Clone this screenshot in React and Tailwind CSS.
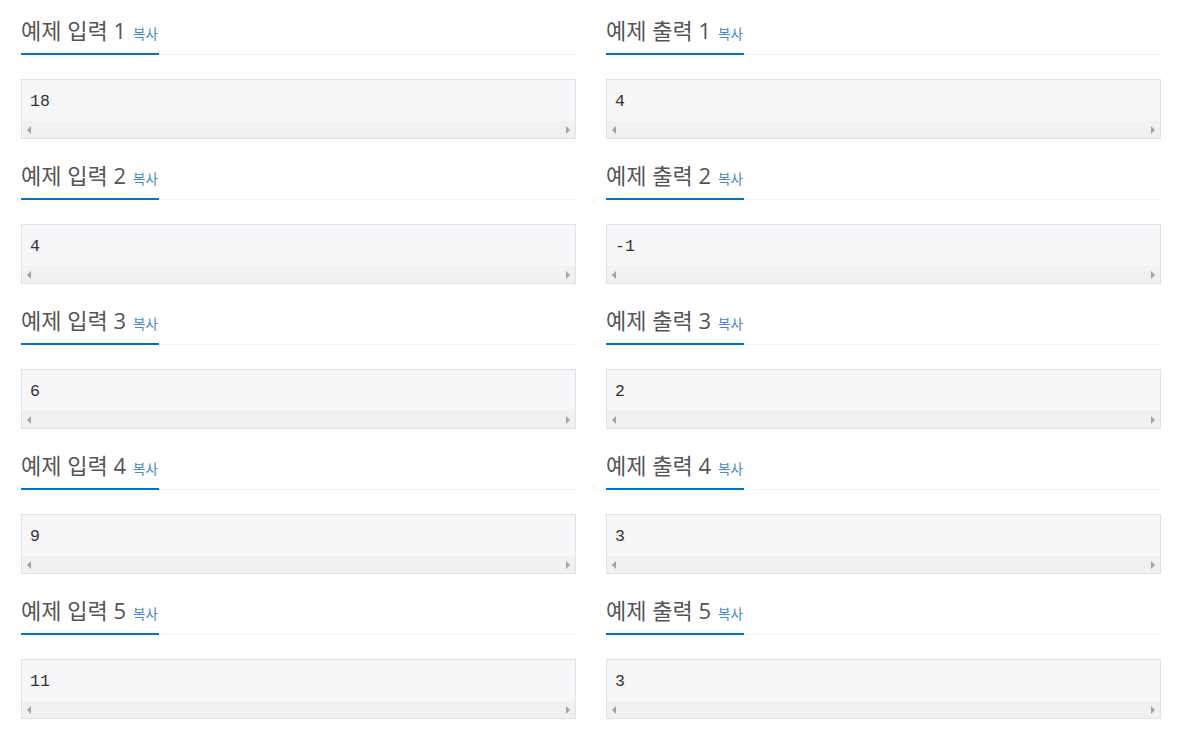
const samples = [
  { n: 1, input: '18', output: '4' },
  { n: 2, input: '4', output: '-1' },
  { n: 3, input: '6', output: '2' },
  { n: 4, input: '9', output: '3' },
  { n: 5, input: '11', output: '3' },
];

const Headline = ({ title }) => (
  <div className="flex border-b border-dotted border-[#e4e9f0]">
    <h2 className="-mb-px flex h-[34px] items-baseline border-b-2 border-[#0076c0] pb-[13px] pr-px text-[22px] leading-[19px] font-normal text-[#555]">
      {title}
      <span className="ml-[7px] text-[13.5px] leading-[19px] text-[#4a87c8]">복사</span>
    </h2>
  </div>
);

const SampleBox = ({ value }) => (
  <div className="mt-[24px] h-[60px] border border-[#e1e1e8] bg-[#f7f7f9]">
    <div className="flex h-[41px] items-center pl-[8px] pt-[3px] font-['Liberation_Mono',monospace] text-[16.5px] text-[#333]">
      {value}
    </div>
    <div className="flex h-[17px] items-center justify-between bg-[#f1f1f1] px-[5px]">
      <span className="h-0 w-0 border-y-[4px] border-r-[4px] border-y-transparent border-r-[#a3a3a3]" />
      <span className="h-0 w-0 border-y-[4px] border-l-[4px] border-y-transparent border-l-[#a3a3a3]" />
    </div>
  </div>
);

const Cell = ({ title, value }) => (
  <div className="pt-[21px] pb-[6px]">
    <Headline title={title} />
    <SampleBox value={value} />
  </div>
);

export default function App() {
  return (
    <div className="min-h-screen bg-white font-['Open_Sans','Noto_Sans_CJK_KR',sans-serif]">
      <div className="grid grid-cols-[555px_555px] gap-x-[30px] px-[21px]">
        {samples.map((s) => (
          <div key={s.n} className="contents">
            <Cell title={`예제 입력 ${s.n}`} value={s.input} />
            <Cell title={`예제 출력 ${s.n}`} value={s.output} />
          </div>
        ))}
      </div>
    </div>
  );
}
